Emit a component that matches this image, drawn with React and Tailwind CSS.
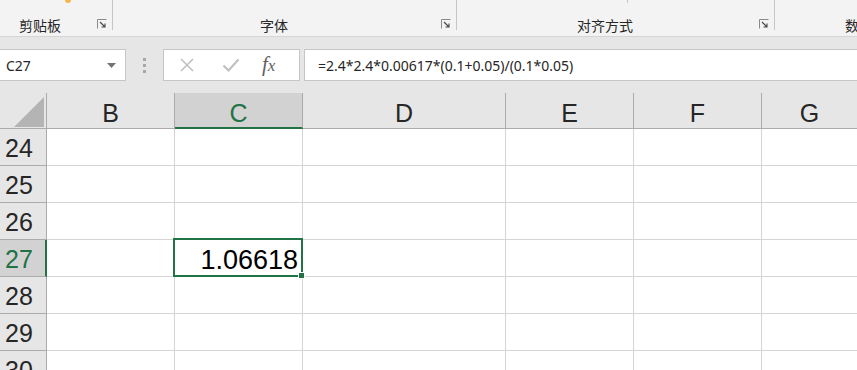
const cols = [
  { name: "B", w: "w-[128px]" },
  { name: "C", w: "w-[128px]" },
  { name: "D", w: "w-[203px]" },
  { name: "E", w: "w-[128px]" },
  { name: "F", w: "w-[128px]" },
  { name: "G", w: "flex-1" },
];

const rows = [24, 25, 26, 27, 28, 29, 30];

function Launcher() {
  return (
    <svg width="10" height="10" viewBox="0 0 10 10" className="shrink-0">
      <path d="M0.5 9.5V0.5H9.5" fill="none" stroke="#8a8a8a" strokeWidth="1" />
      <path d="M3 3L8 8M8 4.5V8H4.5" fill="none" stroke="#444" strokeWidth="1.1" />
    </svg>
  );
}

function Sep() {
  return <div className="w-px h-[30px] bg-[#c6c6c6] shrink-0" />;
}

function App() {
  return (
    <div className="w-[857px] h-[370px] overflow-hidden bg-white font-['Noto_Sans','Noto_Sans_CJK_SC',sans-serif]">
      {/* Ribbon group labels */}
      <div className="h-[37px] bg-[#f3f3f3] border-b border-[#d5d5d5] flex text-[14px] text-[#262626] font-['Noto_Sans_CJK_SC',sans-serif]">
        <div className="w-[113px] shrink-0 flex">
          <div className="flex-1 relative flex items-end justify-between pb-[2px] pl-[19px] pr-[5px]">
            <span className="leading-[18px]">剪贴板</span>
            <div className="mb-[5px]"><Launcher /></div>
            <div className="absolute left-[65px] top-0 w-[6px] h-[3px] rounded-b-full bg-[#f5b54a]" />
          </div>
          <Sep />
        </div>
        <div className="w-[344px] shrink-0 flex">
          <div className="flex-1 flex items-end pb-[2px] pr-[5px]">
            <span className="leading-[18px] flex-1 text-center pr-[6px]">字体</span>
            <div className="mb-[5px]"><Launcher /></div>
          </div>
          <Sep />
        </div>
        <div className="w-[318px] shrink-0 flex">
          <div className="flex-1 relative flex items-end pb-[2px] pr-[5px]">
            <span className="leading-[18px] flex-1 text-center pr-[6px]">对齐方式</span>
            <div className="mb-[5px]"><Launcher /></div>
            <div className="absolute left-[170px] top-0 w-px h-[3px] bg-[#c6c6c6]" />
          </div>
          <Sep />
        </div>
        <div className="flex-1 min-w-0 overflow-hidden flex items-end pb-[2px] pl-[70px]">
          <span className="leading-[18px] whitespace-nowrap">数字</span>
        </div>
      </div>

      {/* Formula bar */}
      <div className="h-[56px] bg-[#e6e6e6] flex items-start pt-[12px]">
        <div className="w-[126px] h-[32px] bg-white border border-[#c6c6c6] border-l-0 flex items-center justify-between pl-[6px] pr-[9px] text-[14px] text-[#262626]">
          <span>C27</span>
          <svg width="9" height="5" viewBox="0 0 9 5"><path d="M0 0H9L4.5 5Z" fill="#737373" /></svg>
        </div>
        <div className="w-[37px] flex flex-col items-center gap-[3px] pt-[9px]">
          <div className="w-[3px] h-[3px] bg-[#a8a8a8]" />
          <div className="w-[3px] h-[3px] bg-[#a8a8a8]" />
          <div className="w-[3px] h-[3px] bg-[#a8a8a8]" />
        </div>
        <div className="w-[137px] h-[32px] bg-white border border-[#c6c6c6] flex items-center">
          <svg width="16" height="16" viewBox="0 0 16 16" className="ml-[15px]">
            <path d="M2 2L14 14M14 2L2 14" stroke="#c0c0c0" strokeWidth="1.6" />
          </svg>
          <svg width="18" height="16" viewBox="0 0 18 16" className="ml-[27px]">
            <path d="M1.5 8.5L6.5 13.5L16.5 2.5" fill="none" stroke="#c0c0c0" strokeWidth="2.2" />
          </svg>
          <span className="ml-[22px] text-[21px] italic text-[#5f5f5f] font-['Liberation_Serif',serif] leading-none -mt-[2px]">
            f<span className="text-[17px]">x</span>
          </span>
        </div>
        <div className="flex-1 ml-[4px] h-[32px] bg-white border border-[#c6c6c6] border-r-0 flex items-center pl-[13px] text-[14px] text-[#262626]">
          =2.4*2.4*0.00617*(0.1+0.05)/(0.1*0.05)
        </div>
      </div>

      {/* Column headers */}
      <div className="h-[36px] flex bg-[#e6e6e6] font-['Liberation_Sans',sans-serif] text-[25px] text-[#262626]">
        <div className="w-[47px] shrink-0 border-r border-b border-[#ababab] relative">
          <svg width="30" height="30" viewBox="0 0 30 30" className="absolute left-[14px] top-[4px]">
            <path d="M30 0V30H0Z" fill="#b4b4b4" />
          </svg>
        </div>
        {cols.map((c) =>
          c.name === "C" ? (
            <div key={c.name} className={`${c.w} shrink-0 bg-[#d2d2d2] border-r border-[#ababab] border-b-2 border-b-[#217346] flex items-center justify-center text-[#217346] pt-[7px]`}>
              {c.name}
            </div>
          ) : (
            <div key={c.name} className={`${c.w} ${c.name === "G" ? "" : "shrink-0 border-r"} border-b border-[#ababab] flex items-center justify-center pt-[7px]`}>
              {c.name}
            </div>
          )
        )}
      </div>

      {/* Rows */}
      {rows.map((r) => (
        <div key={r} className="h-[37px] flex font-['Liberation_Sans',sans-serif] text-[25px] text-[#262626]">
          <div
            className={`w-[47px] shrink-0 border-b border-[#ababab] flex items-center pl-[5px] pt-[4px] ${
              r === 27 ? "bg-[#d2d2d2] text-[#217346] border-r-2 border-r-[#217346]" : "bg-[#e6e6e6] border-r border-r-[#ababab]"
            }`}
          >
            {r}
          </div>
          {cols.map((c) =>
            c.name === "C" && r === 27 ? (
              <div key={c.name} className={`${c.w} shrink-0 border-r border-b border-[#d4d4d4] relative`}>
                <div className="absolute -left-[2px] -top-[2px] w-[130px] h-[39px] border-2 border-[#217346] flex items-center justify-end pr-[3px] pt-[6px] text-[27px] text-black">
                  1.06618
                </div>
                <div className="absolute -right-[3px] -bottom-[3px] w-[5px] h-[5px] bg-[#217346] border border-white box-content" />
              </div>
            ) : (
              <div key={c.name} className={`${c.w} ${c.name === "G" ? "" : "shrink-0 border-r"} border-b border-[#d4d4d4]`} />
            )
          )}
        </div>
      ))}
    </div>
  );
}

export default App;
